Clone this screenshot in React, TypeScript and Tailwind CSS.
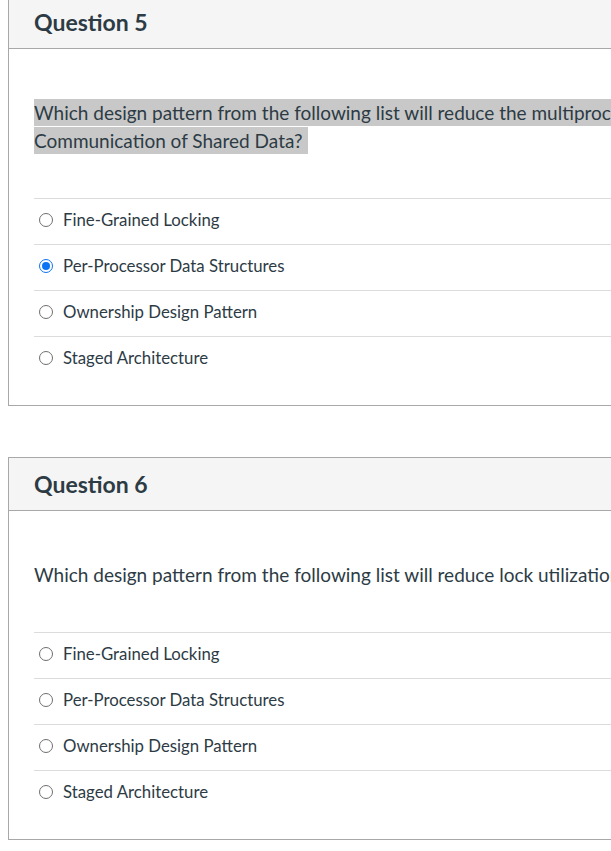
import React from "react";

const options = [
  "Fine-Grained Locking",
  "Per-Processor Data Structures",
  "Ownership Design Pattern",
  "Staged Architecture",
];

function Radio({ checked }: { checked: boolean }) {
  return checked ? (
    <span className="flex h-[14px] w-[14px] shrink-0 items-center justify-center rounded-full border-[1.5px] border-[#0b74f5] bg-white">
      <span className="h-[8px] w-[8px] rounded-full bg-[#0b74f5]" />
    </span>
  ) : (
    <span className="h-[14px] w-[14px] shrink-0 rounded-full border border-[#6f6f6f] bg-white" />
  );
}

function Card({
  title,
  question,
  highlighted,
  selected,
  className,
}: {
  title: string;
  question: React.ReactNode;
  highlighted?: boolean;
  selected: number;
  className?: string;
}) {
  return (
    <div className={"w-[900px] border border-[#a8a8a8] " + (className ?? "")}>
      <div className="flex h-[53px] items-center border-b border-[#a8a8a8] bg-[#f5f5f5] px-[25px]">
        <h2 className="text-[23px] font-bold text-[#2d3b45]">{title}</h2>
      </div>
      <div className="pl-[25px] pt-[50px] pb-[23px]">
        <div className="whitespace-nowrap text-[19px] leading-[28px] text-[#2d3b45]">
          {highlighted ? (
            <span className="bg-[#c8c8c8] py-[2px] pr-[6px]">{question}</span>
          ) : (
            question
          )}
        </div>
        <div className="mt-[43px]">
          {options.map((o, i) => (
            <div
              key={o}
              className="flex h-[46px] items-center gap-[10px] border-t border-[#dcdcdc] pb-[4px] pl-[5px] text-[16.8px] text-[#2d3b45]"
            >
              <Radio checked={i === selected} />
              <span>{o}</span>
            </div>
          ))}
        </div>
      </div>
    </div>
  );
}

export default function App() {
  return (
    <div
      className="h-[851px] w-[611px] overflow-hidden bg-white pl-[8px]"
      style={{ fontFamily: "Lato, 'Open Sans', sans-serif" }}
    >
      <Card
        className="mt-[-5px]"
        title="Question 5"
        highlighted
        selected={1}
        question={
          <>
            Which design pattern from the following list will reduce the multiprocessor
            <br />
            Communication of Shared Data?
          </>
        }
      />
      <Card
        className="mt-[51px]"
        title="Question 6"
        selected={-1}
        question="Which design pattern from the following list will reduce lock utilization?"
      />
    </div>
  );
}
